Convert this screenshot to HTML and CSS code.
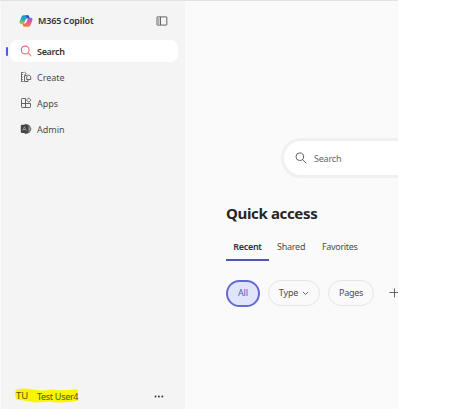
FILE: index.html
```html
<!DOCTYPE html>
<html lang="en">
<head>
<meta charset="utf-8">
<title>M365 Copilot</title>
<link rel="stylesheet" href="styles.css">
</head>
<body>
<div class="app">
  <aside class="sidebar">
    <header class="brand">
      <svg class="logo" width="14" height="14" viewBox="0 0 14 14">
        <defs>
          <linearGradient id="cool" x1="0" y1="0" x2="0" y2="1"><stop offset="0" stop-color="#1689e8"/><stop offset=".55" stop-color="#32b5a4"/><stop offset="1" stop-color="#e8c324"/></linearGradient>
          <linearGradient id="warm" x1="0" y1="0" x2="0" y2="1"><stop offset="0" stop-color="#9b55e5"/><stop offset=".55" stop-color="#ee5c8d"/><stop offset="1" stop-color="#f5823c"/></linearGradient>
        </defs>
        <path d="M4.800 1.300H8.500C9.600 1.300 9.900 2 10.200 3.100L10.500 4.400H8.800C7.600 4.400 7 5 6.600 6L5.300 8.800C4.900 9.800 4.500 10.200 3.600 10.200H2.400C.8 10.200 .2 9 .7 7.500L2.300 3.300C2.800 2 3.500 1.300 4.800 1.300Z" fill="url(#cool)"/>
        <path d="M9.200 12.700H5.500C4.400 12.700 4.100 12 3.800 10.900L3.500 9.600H5.200C6.400 9.600 7 9 7.400 8L8.700 5.200C9.100 4.200 9.500 3.800 10.400 3.800H11.600C13.200 3.800 13.800 5 13.300 6.500L11.700 10.700C11.200 12 10.500 12.700 9.200 12.700Z" fill="url(#warm)"/>
        <path d="M7 1.300H8.500C9.600 1.300 9.900 2 10.200 3.100L10.400 3.900H8.400C7.500 3.900 7.300 2.500 7 1.300Z" fill="#2350c4"/>
        <path d="M7.100 5.300L8.200 5.300 6.900 8.500 5.900 8.500Z" fill="#f4f4f4"/>
      </svg>
      <span class="brand-name">M365 Copilot</span>
      <svg class="panel" width="12" height="10" viewBox="0 0 12 10" fill="none" stroke="#555" stroke-width=".9">
        <rect x="1" y=".9" width="9.800" height="8.200" rx=".3"/><path d="M4.500 1v8M2 3h1.500M2 5h1.500M2 7h1.500"/>
      </svg>
    </header>
    <nav class="nav">
      <a class="item active">
        <svg width="12" height="12" viewBox="0 0 12 12" fill="none" stroke="url(#find)" stroke-width="1.100" stroke-linecap="round"><defs><linearGradient id="find" gradientUnits="userSpaceOnUse" x1="1" y1="1" x2="11" y2="11"><stop stop-color="#d756ae"/><stop offset="1" stop-color="#f58b55"/></linearGradient></defs><circle cx="5.200" cy="5" r="3.900"/><path d="M8.100 7.900L11 10.800"/></svg>
        <span>Search</span>
      </a>
      <a class="item">
        <svg width="12" height="12" viewBox="0 0 12 12" fill="none" stroke="#555" stroke-width=".9"><path d="M3.500 1.500H1.500V10.500H3.500M1.500 3.500H2.700M1.500 6H2.700M1.500 8.500H2.700M4.500 1.200L6.200 2.600 4.800 4"/><path d="M6.800 4.500H4.500V10.500H8V8.700"/><path d="M6.700 8.500V5.500L8.700 4 10.700 5.500V8.500Z"/></svg>
        <span>Create</span>
      </a>
      <a class="item">
        <svg width="12" height="12" viewBox="0 0 12 12" fill="none" stroke="#555" stroke-width=".9"><path d="M5.500 1.500H2.300Q1.500 1.500 1.500 2.300V9.800Q1.500 10.500 2.200 10.500H9.800Q10.500 10.500 10.500 9.800V6.500H1.500M5.500 1.500V10.500"/><rect x="7.100" y="1.500" width="3.200" height="3.200" rx=".8" transform="rotate(45 8.700 3.100)"/></svg>
        <span>Apps</span>
      </a>
      <a class="item">
        <svg width="12" height="12" viewBox="0 0 12 12"><path d="M5 1.200L9.300 2.500 11 6 9.300 9.500 5 10.800Z" fill="#999" stroke="#555" stroke-width=".8"/><rect x=".8" y="1.800" width="7.700" height="8.200" rx="1.200" fill="#444"/><path d="M2.600 7.800L4.400 3.700 6.300 7.800M3.200 6.500H5.700" fill="none" stroke="#aaa" stroke-width=".7"/></svg>
        <span>Admin</span>
      </a>
    </nav>
    <footer class="account">
      <div class="user">
        <svg class="marker" width="65" height="16" viewBox="0 0 65 16"><path d="M2 1.500Q9-.5 18 1.500T36 1.500Q47 3 62 1.300L63 3.500V12.500L55 14Q43 15 34 13.500L20 14.500Q8 12 1.500 11.500L0 7Q0 2 2 1.500Z" fill="#f8f500"/></svg>
        <span class="initials">TU</span><span class="user-name">Test User4</span>
      </div>
      <svg class="more" width="10" height="3" viewBox="0 0 10 3" fill="#333"><circle cx="1.500" cy="1.500" r=".95"/><circle cx="4.900" cy="1.500" r=".95"/><circle cx="8.300" cy="1.500" r=".95"/></svg>
    </footer>
  </aside>
  <main class="content">
    <div class="search">
      <svg width="12" height="12" viewBox="0 0 12 12" fill="none" stroke="#555" stroke-width=".9" stroke-linecap="round"><circle cx="4.800" cy="4.700" r="3.800"/><path d="M7.600 7.500L11 11"/></svg>
      <span>Search</span>
    </div>
    <h1>Quick access</h1>
    <div class="tabs">
      <span class="tab selected">Recent</span><span class="tab shared">Shared</span><span class="tab favorites">Favorites</span>
    </div>
    <div class="filters">
      <span class="chip all">All</span>
      <span class="chip type">Type<svg width="7" height="5" viewBox="0 0 7 5" fill="none" stroke="#555" stroke-width=".9"><path d="M1 1l2.500 2.500L6 1"/></svg></span>
      <span class="chip pages">Pages</span>
      <svg class="plus" width="10" height="10" viewBox="0 0 10 10" stroke="#555" stroke-width=".9"><path d="M5.500 .5v9M.5 4.500h9"/></svg>
    </div>
  </main>
</div>
</body>
</html>
```

FILE: styles.css
```css
* { box-sizing: border-box; }
body { margin: 0; background: #fff; color: #4c4c4c; font: 9px/12px "Noto Sans", "Open Sans", sans-serif; overflow: hidden; }
svg { display: block; flex: none; }
.app { display: flex; width: 398px; height: 409px; overflow: hidden; border-top: 1px solid #e2e2e2; background: #fafafa; }
.sidebar { display: flex; flex-direction: column; flex: none; width: 185px; background: #f4f4f4; border-left: 1px solid #fafafa; }
.brand { display: flex; align-items: center; height: 38px; padding: 1px 17px 0 18px; }
.brand-name { margin-left: 5px; padding-top: 1px; color: #333; font-weight: 600; letter-spacing: -.16px; }
.panel { margin-left: auto; }
.nav { display: flex; flex-direction: column; gap: 4px; padding: 1px 7px 0 5px; }
.item { display: flex; align-items: center; gap: 5px; height: 22px; padding-left: 14px; }
.item span { padding-top: 2px; }
.active { position: relative; margin-left: 4px; padding-left: 10px; border-radius: 7px; background: #fff; color: #333; font-weight: 600; letter-spacing: -.3px; }
.active::before { content: ""; position: absolute; left: -4px; top: 7px; width: 2px; height: 9px; border-radius: 1px; background: #5258d8; }
.account { display: flex; align-items: center; margin-top: auto; height: 26px; padding: 0 21px 0 14px; }
.user { position: relative; display: flex; width: 64px; color: #55560b; }
.marker { position: absolute; left: 0; top: -2px; }
.initials, .user-name { position: relative; white-space: nowrap; }
.initials { width: 22px; padding-left: 1px; font-size: 9.500px; }
.user-name { padding-top: 1px; letter-spacing: -.3px; }
.more { margin-left: auto; }
.content { flex: none; width: 213px; padding: 137px 0 0 41px; overflow: hidden; }
.search { display: flex; align-items: center; gap: 7px; width: 180px; height: 40px; margin-left: 55px; padding-left: 11px; border: 3px solid #f0f0f0; border-radius: 20px; background: #fff; color: #666; letter-spacing: -.2px; }
.search span { padding-top: 1px; }
h1 { margin: 25px 0 0; color: #262626; font-size: 15px; font-weight: 700; line-height: 20px; letter-spacing: -.35px; }
.tabs { display: flex; height: 23px; margin-top: 15px; }
.tab { padding-top: 3px; }
.selected { width: 43px; margin-right: 8px; border-bottom: 2px solid #5155b8; color: #333; font-weight: 600; letter-spacing: -.3px; text-align: center; }
.shared { width: 45px; letter-spacing: -.25px; }
.favorites { letter-spacing: -.32px; }
.filters { display: flex; align-items: center; margin-top: 18px; height: 28px; }
.chip { display: flex; flex: none; align-items: center; justify-content: center; height: 26px; border: 1px solid #e5e5e5; border-radius: 13px; letter-spacing: -.1px; }
.all { width: 34px; height: 27px; margin-right: 8px; border: 2px solid #656ad2; border-radius: 14px; background: #e1e5fb; color: #5258c8; }
.type { width: 52px; gap: 4px; margin-right: 8px; }
.pages { width: 46px; margin-right: 15px; letter-spacing: -.3px; }
```
